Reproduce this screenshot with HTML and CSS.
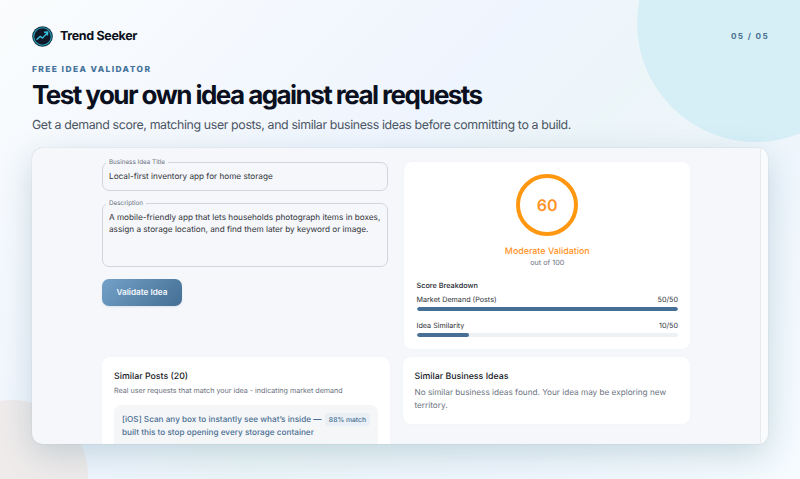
FILE: index.html
```html
<!DOCTYPE html>
<html lang="en">
<head>
<meta charset="utf-8">
<title>Trend Seeker</title>
<link rel="stylesheet" href="styles.css">
</head>
<body>
<main class="slide">
  <div class="orb orb-blue"></div>
  <div class="orb orb-warm"></div>
  <header class="top">
    <div class="brand">
      <svg class="logo" viewBox="0 0 22 22">
        <circle cx="11" cy="11" r="10.8" fill="#12303f"/>
        <circle cx="11" cy="11" r="9.2" fill="#111827" stroke="#2ba6c0" stroke-width="1.1"/>
        <path d="M4.7 14.4 8.7 10.9l2.3 1.8 4.9-5.4M12.6 6.5l3.8-.2-.2 3.7" fill="none" stroke="#35bdd8" stroke-width="1.5" stroke-linejoin="round"/>
      </svg>
      <span class="brand-name">Trend Seeker</span>
    </div>
    <span class="page-no">05 / 05</span>
  </header>
  <p class="eyebrow">FREE IDEA VALIDATOR</p>
  <h1 class="title">Test your own idea against real requests</h1>
  <p class="lead">Get a demand score, matching user posts, and similar business ideas before committing to a build.</p>

  <section class="window">
    <div class="page">
      <div class="row">
        <form class="form">
          <fieldset class="field field-title">
            <legend>Business Idea Title</legend>
            <p>Local-first inventory app for home storage</p>
          </fieldset>
          <fieldset class="field field-desc">
            <legend>Description</legend>
            <p>A mobile-friendly app that lets households photograph items in boxes,<br>assign a storage location, and find them later by keyword or image.</p>
          </fieldset>
          <button class="submit" type="button">Validate Idea</button>
        </form>
        <div class="card score">
          <div class="ring">60</div>
          <p class="verdict">Moderate Validation</p>
          <p class="outof">out of 100</p>
          <h2 class="breakdown">Score Breakdown</h2>
          <div class="metric"><span>Market Demand (Posts)</span><span>50/50</span></div>
          <div class="bar"><div class="fill" style="width:100%"></div></div>
          <div class="metric metric-next"><span>Idea Similarity</span><span>10/50</span></div>
          <div class="bar"><div class="fill" style="width:20%"></div></div>
        </div>
      </div>
      <div class="row results">
        <div class="card posts">
          <h2 class="card-title">Similar Posts (20)</h2>
          <p class="note">Real user requests that match your idea - indicating market demand</p>
          <article class="post">
            <p class="post-title">[iOS] Scan any box to instantly see what’s inside —<br>built this to stop opening every storage container</p>
            <span class="match">88% match</span>
          </article>
        </div>
        <div class="card ideas">
          <h2 class="card-title">Similar Business Ideas</h2>
          <p class="empty">No similar business ideas found. Your idea may be exploring new<br>territory.</p>
        </div>
      </div>
    </div>
    <div class="gutter"></div>
  </section>
</main>
</body>
</html>
```
FILE: styles.css
```css
* { box-sizing: border-box; }
body, p, h1, h2, fieldset { margin: 0; }
body { font-family: Inter, "Liberation Sans", sans-serif; color: #0b1020; text-rendering: geometricPrecision; }

.slide {
  position: relative;
  width: 800px;
  height: 479px;
  overflow: hidden;
  padding: 25px 32px 0;
  background: linear-gradient(135deg, #fafcfd 0%, #eff5fe 42%, #ecf5f8 56%, #eff6fd 75%, #f5fbfe 100%);
}
.orb { position: absolute; border-radius: 50%; }
.orb-blue { left: 637px; top: -96px; width: 238px; height: 238px; background: #d6eff7; }
.orb-warm { left: -64px; top: 400px; width: 152px; height: 152px; background: #efebeb; }

.top { position: relative; display: flex; justify-content: space-between; align-items: center; height: 22px; }
.brand { display: flex; align-items: center; gap: 7px; }
.logo { width: 21px; height: 21px; }
.brand-name { padding-top: 1px; font-size: 12.5px; font-weight: 700; letter-spacing: -.34px; line-height: 22px; }
.page-no { font-size: 8.2px; font-weight: 700; letter-spacing: 1.35px; color: #4a7190; margin-right: -1px; }
.eyebrow { position: relative; margin-top: 18px; font-size: 8.4px; line-height: 10px; font-weight: 800; letter-spacing: 1.42px; color: #44729a; }
.title { margin-top: 5px; font-size: 26px; line-height: 32px; font-weight: 700; letter-spacing: -1.55px; white-space: nowrap; }
.lead { margin-top: 4px; font-size: 12.4px; line-height: 18px; letter-spacing: -.38px; color: #4b5563; white-space: nowrap; }

.window {
  position: relative;
  display: flex;
  width: 736px;
  height: 296px;
  margin-top: 14px;
  border-radius: 10px;
  overflow: hidden;
  background: #f5f7fb;
  box-shadow: 0 0 1px rgba(50, 80, 100, .3), 0 10px 32px rgba(40, 100, 120, .22);
}
.page { flex: 1; padding: 10px 70px 0; }
.gutter { width: 8px; background: #fafbfc; border-left: 1px solid #e8ebee; }
.row { display: flex; justify-content: space-between; }
.form { width: 286px; }
.field { display: block; min-width: 0; border: 1px solid #d1d5db; border-radius: 7px; padding: 0 6px; }
.field legend { margin-left: -3px; padding: 0 3px; font-size: 6.3px; line-height: 8px; color: #6b7280; }
.field p { font-size: 8.2px; line-height: 12px; color: #303338; white-space: nowrap; }
.field-title { height: 33px; }
.field-title p { padding-top: 4px; }
.field-desc { height: 68px; margin-top: 8px; }
.field-desc p { padding-top: 4px; }
.submit { display: block; width: 80px; height: 27px; margin-top: 12px; padding: 0; border: 0; border-radius: 7px; color: #f5f9fc; font: 600 8.2px/27px Inter, sans-serif; background: linear-gradient(135deg, #73a1c8, #456f94); box-shadow: 0 1px 2px rgba(60, 100, 140, .12); }

.card { background: #fff; border-radius: 8px; box-shadow: 0 0 3px rgba(50, 80, 100, .03); }
.score { width: 286px; height: 187px; margin-top: 4px; padding: 12px 12px 0 12.5px; }
.ring { width: 62px; height: 62px; margin: 0 auto; border: 4px solid #ff9810; border-radius: 50%; font-size: 16px; font-weight: 600; line-height: 55px; text-align: center; color: #ff9327; }
.verdict { margin-top: 10px; text-align: center; font-size: 8.9px; line-height: 12px; font-weight: 500; color: #ff9327; }
.outof { text-align: center; font-size: 7.2px; line-height: 10px; color: #6b7280; }
.breakdown { margin-top: 12px; font-size: 7.3px; line-height: 12px; font-weight: 500; color: #22252a; }
.metric { display: flex; justify-content: space-between; margin-top: 2px; font-size: 7.2px; line-height: 12px; color: #303338; }
.bar { height: 4px; margin-top: 1px; border-radius: 2px; background: #edf1f4; overflow: hidden; }
.fill { height: 4px; border-radius: 2px; background: #456f94; }
.metric-next { margin-top: 8.5px; }

.results { margin-top: 8px; }
.posts { width: 288px; height: 110px; padding: 12px; }
.ideas { width: 287.5px; height: 67px; padding: 12px; }
.card-title { padding-top: 1px; font-size: 8.8px; line-height: 13px; font-weight: 500; color: #15181d; }
.note { margin-top: 2px; font-size: 7.15px; line-height: 11px; color: #6b7280; white-space: nowrap; }
.empty { margin-top: 3px; font-size: 8.2px; line-height: 13px; color: #6b7280; white-space: nowrap; }
.post { display: flex; justify-content: space-between; align-items: flex-start; height: 70px; margin-top: 9px; padding: 8px; border-radius: 7px; background: #f5f6f7; }
.post-title { font-size: 8.2px; line-height: 13px; font-weight: 500; color: #4a6f94; white-space: nowrap; }
.match { width: 45px; height: 13px; border-radius: 4px; background: #e9eff4; font-size: 6.8px; line-height: 13px; text-align: center; color: #456f94; font-weight: 500; white-space: nowrap; }
```
